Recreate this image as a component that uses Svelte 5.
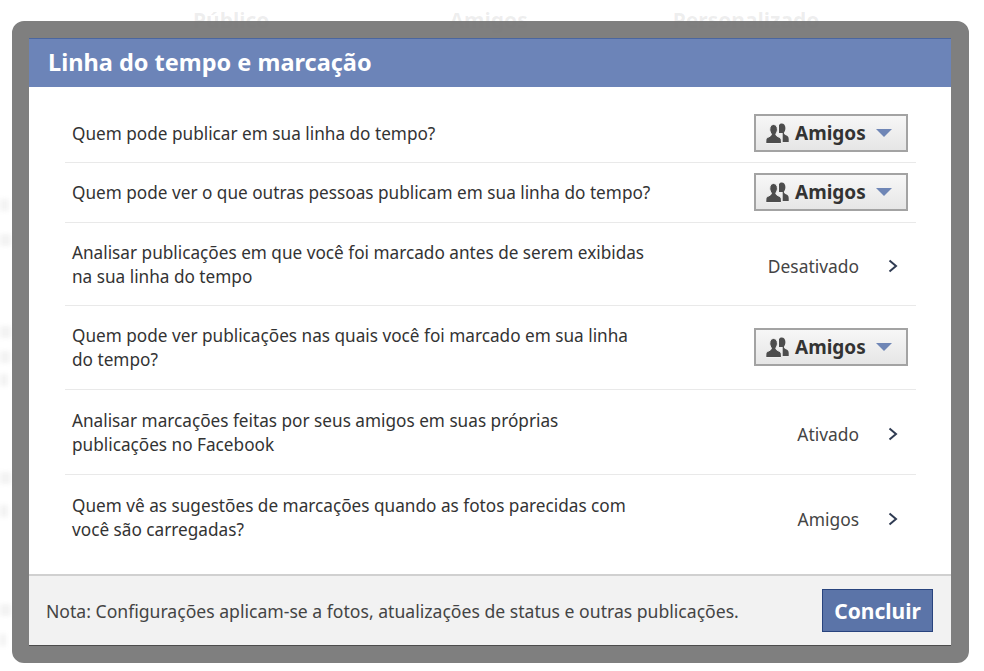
<script>
  const rows = [
    { lines: ['Quem pode publicar em sua linha do tempo?'], audience: 'Amigos', height: 76 },
    { lines: ['Quem pode ver o que outras pessoas publicam em sua linha do tempo?'], audience: 'Amigos', height: 60 },
    { lines: ['Analisar publicações em que você foi marcado antes de serem exibidas', 'na sua linha do tempo'], value: 'Desativado', height: 83 },
    { lines: ['Quem pode ver publicações nas quais você foi marcado em sua linha', 'do tempo?'], audience: 'Amigos', height: 84 },
    { lines: ['Analisar marcações feitas por seus amigos em suas próprias', 'publicações no Facebook'], value: 'Ativado', height: 85 },
    { lines: ['Quem vê as sugestões de marcações quando as fotos parecidas com', 'você são carregadas?'], value: 'Amigos', height: 85 }
  ];
  // blurred page content showing past the left edge of the dialog
  const smudges = [
    { top: 199, width: 9 },
    { top: 234, width: 11 },
    { top: 326, width: 11 },
    { top: 351, width: 10 },
    { top: 374, width: 8 },
    { top: 472, width: 11 },
    { top: 505, width: 8 },
    { top: 604, width: 11 },
    { top: 634, width: 6 }
  ];
</script>

<div class="page">
  <div class="behind">
    <span>Público</span>
    <span class="second">Amigos</span>
    <span class="third">Personalizado</span>
  </div>
  {#each smudges as smudge}
    <i class="smudge" style="top: {smudge.top}px; width: {smudge.width}px"></i>
  {/each}

  <div class="frame">
    <div class="dialog">
      <h1>Linha do tempo e marcação</h1>

      <div class="rows">
        {#each rows as row}
          <div class="row" style="height: {row.height}px">
            <div class="question">
              {#each row.lines as line}
                <div>{line}</div>
              {/each}
            </div>
            {#if row.audience}
              <button class="audience">
                <svg width="23" height="22" viewBox="0 0 23 22">
                  <path fill="#4d4d4d" d="M15.500 1.500c2.600 0 3.900 2.100 3.900 4.600 0 2-.7 3.700-1.500 4.700.1 1.400.8 1.900 2 2.500 1.700.8 2.800 1.600 2.800 3.700V20h-6V11H13V3c.6-.9 1.400-1.500 2.500-1.500z" />
                  <path fill="#4d4d4d" stroke="#f0f0f0" d="M7.500 2.500c2.600 0 3.900 2.200 3.900 4.800 0 2-.7 3.700-1.600 4.700.1 1.500.9 2.100 2.400 2.800 2.100.9 3.200 1.900 3.200 4.200v2.500H-.2V19c0-2.300 1.100-3.300 3.200-4.200 1.500-.7 2.300-1.300 2.400-2.800-.9-1-1.600-2.700-1.600-4.700C3.800 4.700 5 2.500 7.500 2.500z" />
                </svg>
                <span>{row.audience}</span>
                <i class="caret"></i>
              </button>
            {:else}
              <div class="value">
                <span>{row.value}</span>
                <svg width="12" height="14" viewBox="0 0 12 14">
                  <path d="M2.500 1.500 9 7l-6.500 5.500" fill="none" stroke="#2f3b52" stroke-width="2" />
                </svg>
              </div>
            {/if}
          </div>
        {/each}
      </div>

      <div class="footer">
        <p>Nota: Configurações aplicam-se a fotos, atualizações de status e outras publicações.</p>
        <button class="done">Concluir</button>
      </div>
    </div>
  </div>
</div>

<style>
  :global(body) {
    background: #fff;
    font-family: "Noto Sans", "Open Sans", sans-serif;
  }

  .page {
    position: relative;
    width: 984px;
    height: 671px;
    padding: 21px 15px 8px 12px;
    box-sizing: border-box;
    overflow: hidden;
  }

  .behind {
    position: absolute;
    top: 6px;
    left: 193px;
    display: flex;
    font-size: 21px;
    font-weight: 700;
    color: rgba(120, 120, 120, 0.13);
    z-index: 2;
  }

  .second {
    margin-left: 180px;
  }

  .third {
    margin-left: 145px;
  }

  .smudge {
    position: absolute;
    left: 0;
    height: 12px;
    background: rgba(120, 120, 120, 0.09);
    filter: blur(2px);
  }

  .frame {
    height: 100%;
    box-sizing: border-box;
    border: 17px solid #7f7f7f;
    border-right-width: 18px;
    border-radius: 12px;
  }

  .dialog {
    height: 100%;
    display: flex;
    flex-direction: column;
    background: #fff;
    border-top: 1px solid #4a66a0;
    border-bottom: 1px solid #4c4c4c;
    box-sizing: border-box;
  }

  h1 {
    margin: 0;
    height: 48px;
    padding-left: 19px;
    line-height: 46px;
    background: #6c84b8;
    color: #fff;
    font-size: 23.500px;
    font-weight: 700;
  }

  .rows {
    flex: 1;
    padding: 0 35px 0 36px;
  }

  .row {
    display: flex;
    align-items: center;
    justify-content: space-between;
    box-sizing: border-box;
    padding: 0 8px 0 7px;
    border-bottom: 1px solid #e9e9e9;
  }

  .row:first-child {
    padding-top: 17px;
  }

  .row:first-child .audience {
    margin-bottom: 0;
  }

  .row:last-child {
    border-bottom: none;
  }

  .question {
    padding-top: 1px;
    font-size: 17.200px;
    line-height: 24px;
    white-space: nowrap;
    color: #333;
  }

  .audience {
    display: flex;
    align-items: center;
    width: 154px;
    height: 38px;
    margin-bottom: 2px;
    padding: 0 0 0 10px;
    box-sizing: border-box;
    border: 2px solid #a3a3a3;
    background: linear-gradient(#f7f7f7, #e6e6e6);
    color: #333;
    font: 700 19px "Noto Sans", sans-serif;
  }

  .audience span {
    margin-left: 6px;
  }

  .caret {
    margin-left: 10px;
    border-left: 8px solid transparent;
    border-right: 8px solid transparent;
    border-top: 8px solid #6f86b6;
  }

  .value {
    display: flex;
    align-items: center;
    gap: 28px;
    padding-top: 3px;
    padding-right: 9px;
    font-size: 17.400px;
    color: #444;
  }

  .footer {
    display: flex;
    align-items: center;
    justify-content: space-between;
    height: 71px;
    padding: 0 18px 0 17px;
    box-sizing: border-box;
    background: #f2f2f2;
    border-top: 2px solid #d0d0d0;
  }

  .footer p {
    margin: 0;
    font-size: 17.600px;
    color: #444;
  }

  .done {
    width: 111px;
    height: 43px;
    border: 1px solid #29447e;
    background: #5b74a8;
    color: #fff;
    font: 700 21px "Noto Sans", sans-serif;
  }
</style>
